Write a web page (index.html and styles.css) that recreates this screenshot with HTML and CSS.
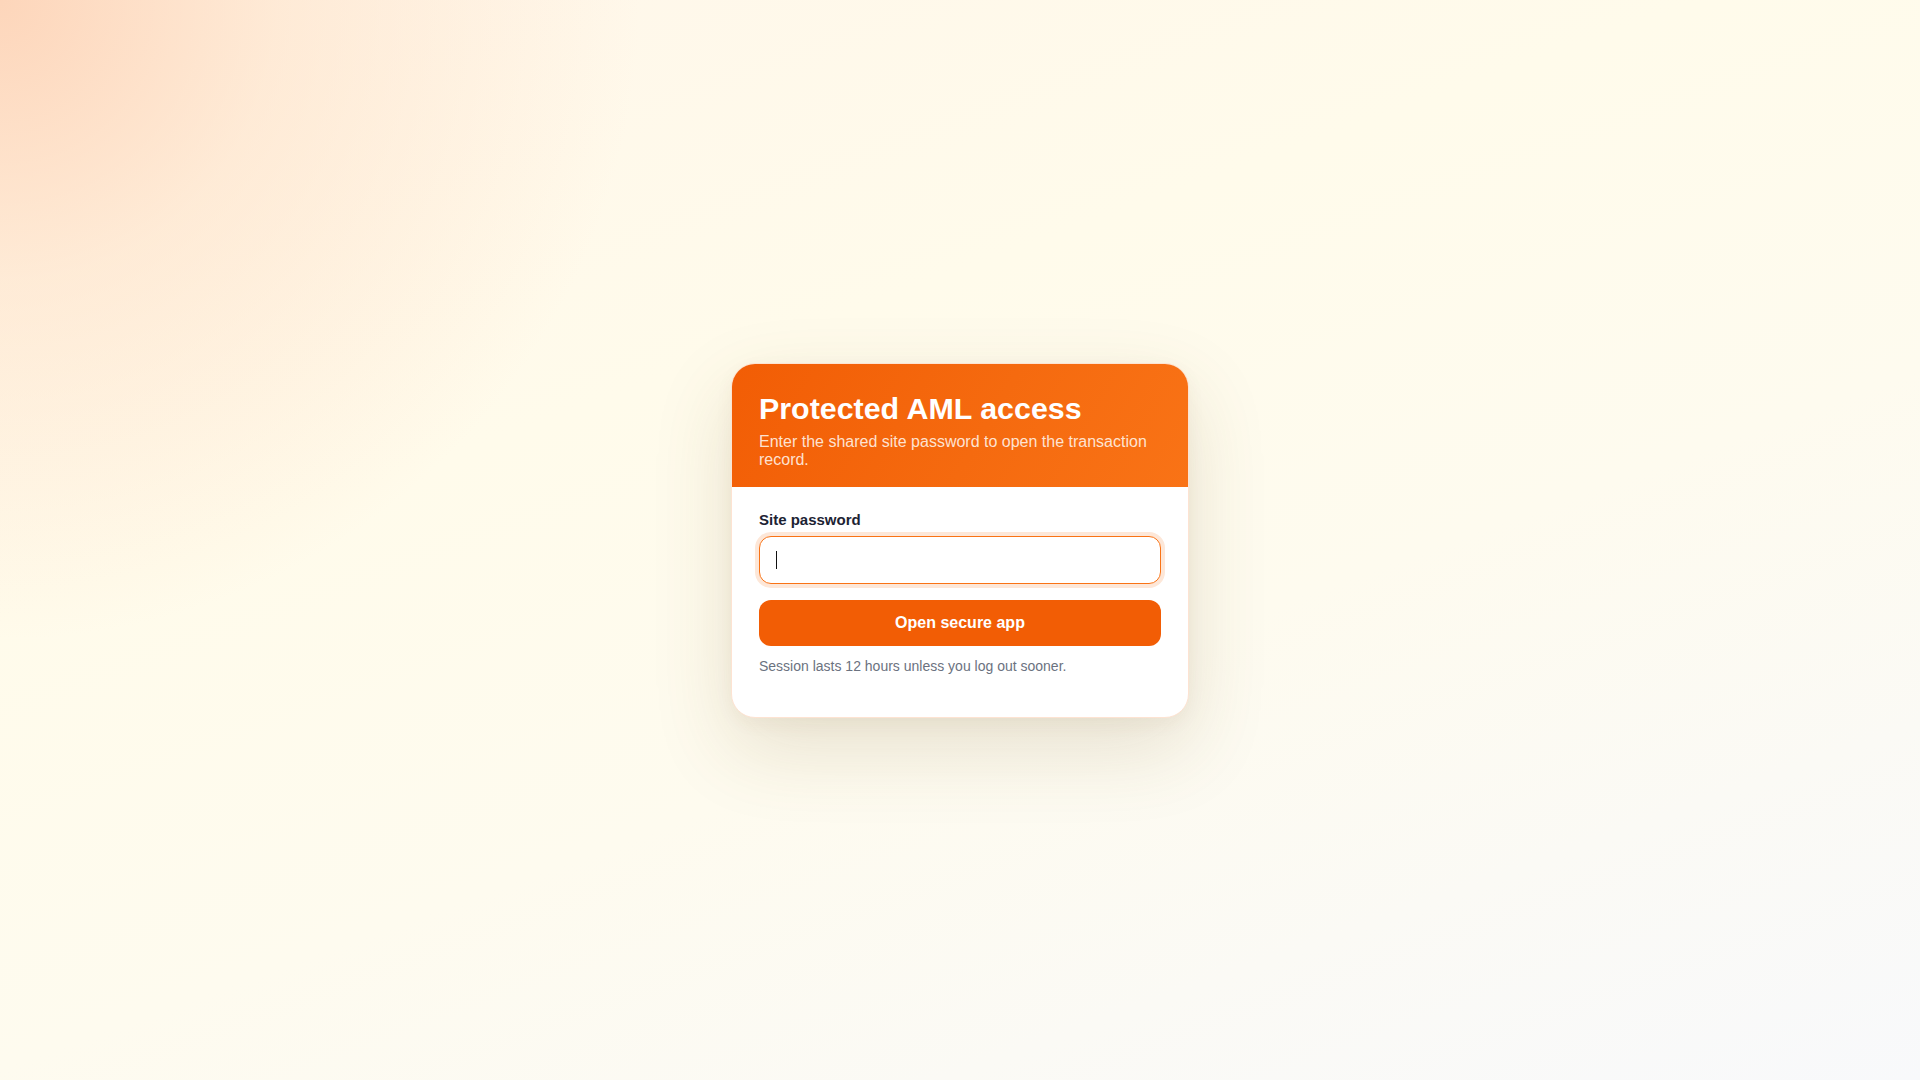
FILE: index.html
```html
<!DOCTYPE html>
<html lang="en">
<head>
<meta charset="utf-8">
<title>Protected AML access</title>
<link rel="stylesheet" href="styles.css">
</head>
<body>
<main class="page">
  <section class="card">
    <header class="card-header">
      <h1 class="card-title">Protected AML access</h1>
      <p class="card-subtitle">Enter the shared site password to open the transaction record.</p>
    </header>
    <form class="card-body" onsubmit="return false;">
      <label class="field-label" for="pw">Site password</label>
      <div class="field-wrap">
        <input class="field-input is-focused" id="pw" type="password">
        <span class="fake-caret"></span>
      </div>
      <button class="submit-btn" type="submit">Open secure app</button>
      <p class="note">Session lasts 12 hours unless you log out sooner.</p>
    </form>
  </section>
</main>
</body>
</html>
```

FILE: styles.css
```css
* { box-sizing: border-box; }
html, body { margin: 0; padding: 0; height: 100%; }
body {
  font-family: "Liberation Sans", Arial, sans-serif;
  background:
    radial-gradient(circle at 0 0, rgba(253, 212, 184, 0.95) 0, rgba(254, 224, 198, 0.55) 280px, rgba(255, 240, 220, 0) 640px),
    linear-gradient(160deg, #fff6ea 0%, #fffbeb 35%, #fefbef 60%, #f8f9fb 100%);
}
.page {
  min-height: 100vh;
  display: flex;
  align-items: center;
  justify-content: center;
}
.card {
  width: 458px;
  background: #ffffff;
  border-radius: 24px;
  overflow: hidden;
  border: 1px solid #fde3d2;
  box-shadow: 0 30px 80px rgba(110, 84, 40, 0.16), 0 6px 18px rgba(110, 84, 40, 0.05);
}
.card-header {
  background: linear-gradient(120deg, #f25d05 0%, #f56a0f 55%, #f97316 100%);
  padding: 27px 27px 18px;
  color: #ffffff;
}
.card-title {
  margin: 0;
  font-size: 30.4px;
  font-weight: 700;
  line-height: normal;
}
.card-subtitle {
  margin: 7px 0 0;
  font-size: 16px;
  line-height: normal;
  color: rgba(255, 240, 228, 0.92);
}
.card-body {
  display: flex;
  flex-direction: column;
  padding: 24px 27px 43px;
  margin: 0;
}
.field-label {
  font-size: 15px;
  font-weight: 700;
  color: #1c2333;
  margin-bottom: 8px;
}
.field-wrap {
  position: relative;
}
.field-input {
  display: block;
  height: 48px;
  width: 100%;
  border: 1px solid #f97316;
  border-radius: 12px;
  padding: 0 16px;
  font-family: inherit;
  font-size: 16px;
  color: #111827;
  background: #ffffff;
  outline: none;
  caret-color: transparent;
}
.field-input.is-focused,
.field-input:focus {
  border-color: #f97316;
  box-shadow: 0 0 0 4px #fde7d8;
}
.fake-caret {
  position: absolute;
  left: 17px;
  top: 15px;
  width: 1px;
  height: 18px;
  background: #111111;
}
.submit-btn {
  margin-top: 16px;
  height: 46px;
  width: 100%;
  border: none;
  border-radius: 12px;
  background: #f25d05;
  color: #ffffff;
  font-family: inherit;
  font-size: 16px;
  font-weight: 700;
  cursor: pointer;
}
.note {
  margin: 12px 0 0;
  font-size: 14px;
  line-height: normal;
  color: #6b7280;
}
```
